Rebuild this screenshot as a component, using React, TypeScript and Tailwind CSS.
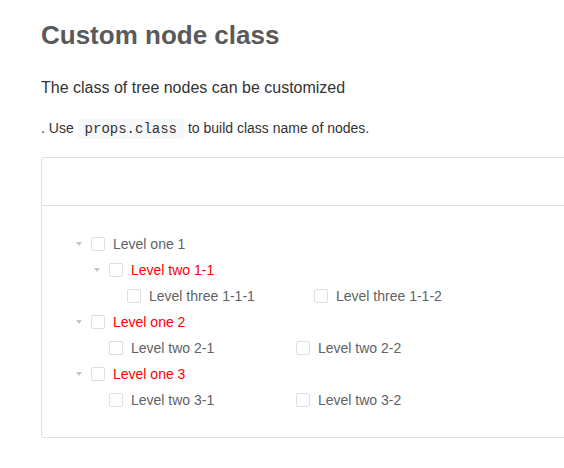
import React from "react";

type TreeNode = { label: string; red?: boolean; children?: TreeNode[] };

const TREE: TreeNode[] = [
  {
    label: "Level one 1",
    children: [
      {
        label: "Level two 1-1",
        red: true,
        children: [{ label: "Level three 1-1-1" }, { label: "Level three 1-1-2" }],
      },
    ],
  },
  {
    label: "Level one 2",
    red: true,
    children: [{ label: "Level two 2-1" }, { label: "Level two 2-2" }],
  },
  {
    label: "Level one 3",
    red: true,
    children: [{ label: "Level two 3-1" }, { label: "Level two 3-2" }],
  },
];

function Checkbox() {
  return <span className="w-[14px] h-[14px] shrink-0 rounded-[2px] border border-[#dcdfe6] bg-white" />;
}

function Label({ node }: { node: TreeNode }) {
  return (
    <span className={`ml-[8px] text-[14px] whitespace-nowrap ${node.red ? "text-[#ff0000]" : "text-[#606266]"}`}>
      {node.label}
    </span>
  );
}

function Node({ node }: { node: TreeNode }) {
  const kids = node.children ?? [];
  const leafKids = kids.every((k) => !k.children);

  return (
    <div>
      <div className="flex items-center h-[26px]">
        <span className="w-[18px] flex justify-center">
          <span className="w-0 h-0 border-l-[3.5px] border-r-[3.5px] border-t-[4px] border-l-transparent border-r-transparent border-t-[#c0c4cc]" />
        </span>
        <span className="ml-[3px] flex items-center">
          <Checkbox />
          <Label node={node} />
        </span>
      </div>
      {leafKids ? (
        <div className="flex flex-wrap pl-[18px]">
          {kids.map((k) => (
            <div key={k.label} className="w-[187px] h-[26px] flex items-center pl-[21px]">
              <Checkbox />
              <Label node={k} />
            </div>
          ))}
        </div>
      ) : (
        <div className="pl-[18px]">
          {kids.map((k) => (
            <Node key={k.label} node={k} />
          ))}
        </div>
      )}
    </div>
  );
}

export default function App() {
  return (
    <div className="w-[564px] h-[468px] overflow-hidden bg-white" style={{ fontFamily: '"Liberation Sans", Arial, sans-serif' }}>
      <div className="pl-[41px] pt-[20px]">
        <h2 className="text-[26px] leading-[31px] font-bold text-[#5a5a5a]">Custom node class</h2>
        <p className="mt-[25px] text-[16px] leading-[24px] text-[#333]">The class of tree nodes can be customized</p>
        <p className="mt-[18px] text-[14px] leading-[20px] text-[#333]">
          . Use{" "}
          <code className="px-[7px] py-[2px] rounded-[3px] bg-[#f6f7f9] text-[#333] text-[14px]" style={{ fontFamily: '"Liberation Mono", "DejaVu Sans Mono", monospace' }}>
            props.class
          </code>{" "}
          to build class name of nodes.
        </p>
        <div className="mt-[18px] w-[600px] h-[281px] rounded-[3px] border border-[#dcdfe6]">
          <div className="h-[48px] border-b border-[#dcdfe6]" />
          <div className="pl-[28px] pt-[25px]">
            {TREE.map((n) => (
              <Node key={n.label} node={n} />
            ))}
          </div>
        </div>
      </div>
    </div>
  );
}
